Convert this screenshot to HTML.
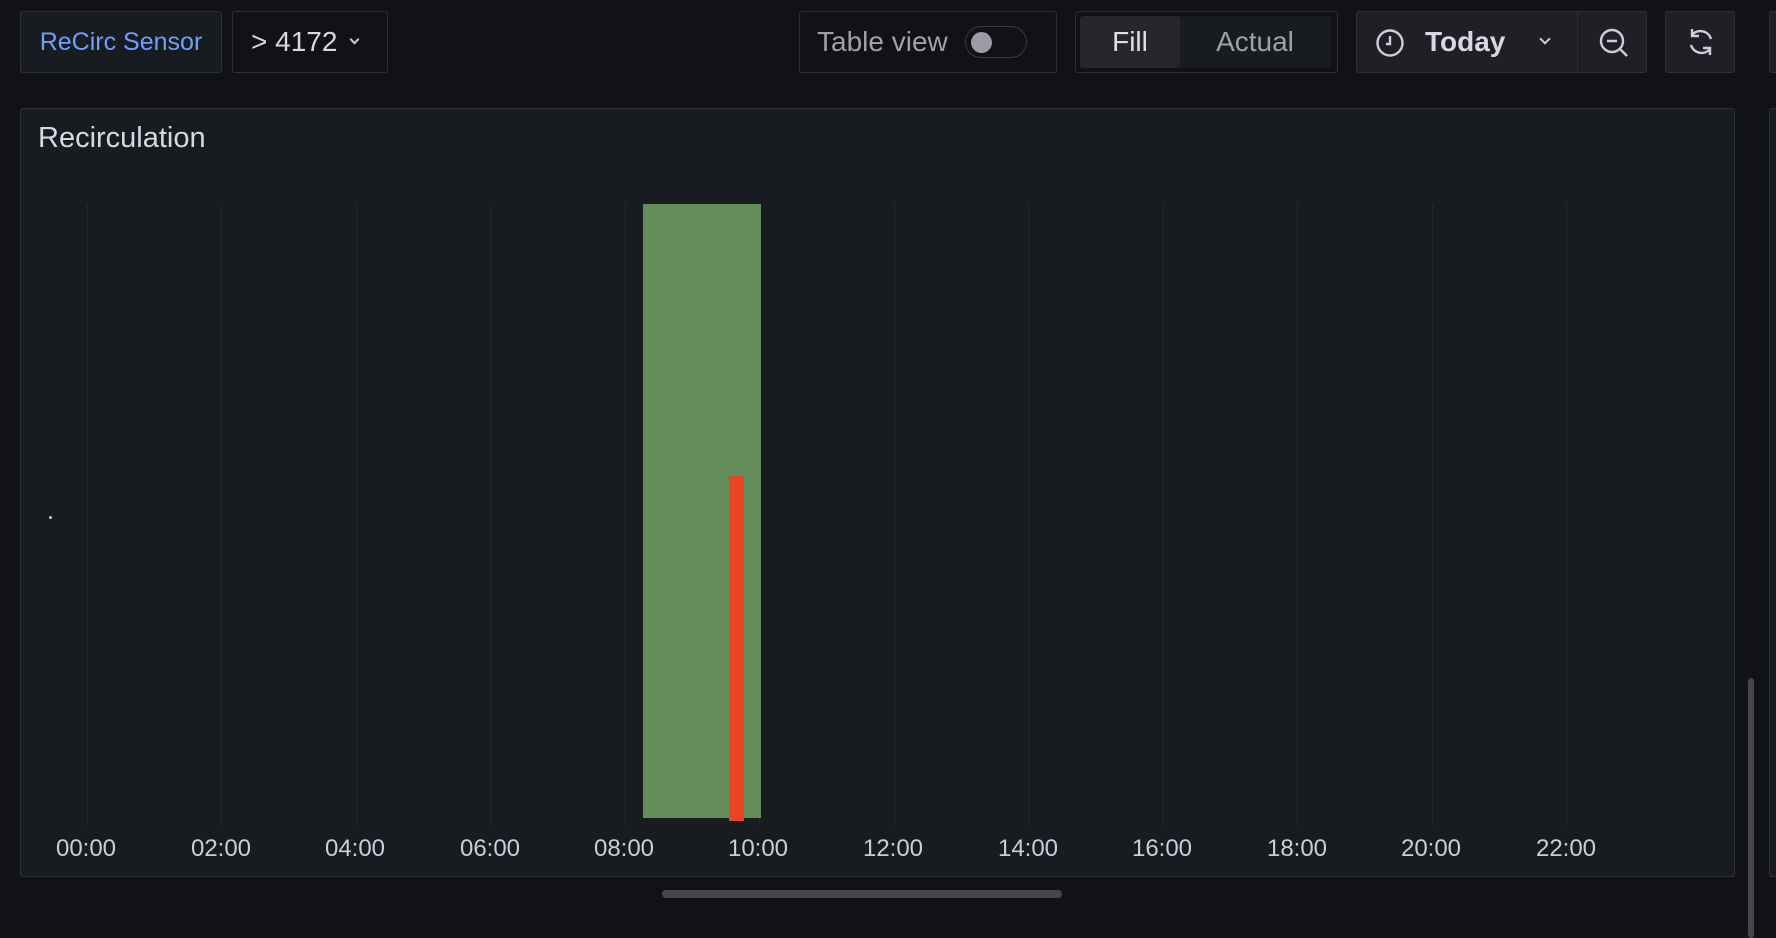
<!DOCTYPE html>
<html><head><style>
*{box-sizing:border-box;margin:0;padding:0}
body{width:1776px;height:934px;background:#111217;position:relative;overflow:hidden;font-family:"Liberation Sans",sans-serif;color:#ccccdc}
.b{position:absolute;border:1px solid #2f3036;border-radius:3px;background:#181b1f;display:flex;align-items:center}
.t{position:absolute;font-size:24px;color:#ccccdc;transform:translateX(-50%);top:835px}
.g{position:absolute;top:204px;height:622px;width:1px;background:#26282d}
.ch{display:inline-block;width:9px;height:9px;border-right:2px solid #ccccdc;border-bottom:2px solid #ccccdc;transform:rotate(45deg)}
</style></head><body>
<div class="b" style="left:20px;top:11px;width:202px;height:62px;justify-content:center;color:#6e9fff;font-size:25px">ReCirc Sensor</div>
<div class="b" style="left:232px;top:11px;width:156px;height:62px;background:#111217;padding-left:18px;font-size:28px;color:#d8d8e4">&gt; 4172 <span class="ch" style="margin-left:14px;margin-top:-6px;width:7px;height:7px"></span></div>
<div class="b" style="left:799px;top:11px;width:258px;height:62px;background:#111217;padding-left:17px;font-size:28px;color:#9fa0aa">Table view
<div style="margin-left:17px;width:62px;height:32px;border:1px solid #3a3b42;border-radius:16px;position:relative"><div style="position:absolute;left:5px;top:5px;width:21px;height:21px;border-radius:50%;background:#9a9ba6"></div></div></div>
<div class="b" style="left:1075px;top:11px;width:263px;height:62px;background:#111217;padding:4px">
<div style="width:100px;height:52px;background:#25272d;border-radius:3px;display:flex;align-items:center;justify-content:center;font-size:28px;color:#e0e0ea">Fill</div>
<div style="width:150px;height:52px;background:#181b1f;display:flex;align-items:center;justify-content:center;font-size:28px;color:#9fa0aa">Actual</div></div>
<div class="b" style="left:1356px;top:11px;width:291px;height:62px;background:#1f2026">
<svg style="position:absolute;left:18px;top:16px" width="30" height="30" viewBox="0 0 30 30" fill="none" stroke="#ccccdc" stroke-width="2.4"><circle cx="15" cy="15" r="12.5"/><path d="M15 8v8h-4"/></svg>
<span style="position:absolute;left:68px;font-size:28px;font-weight:bold;color:#d8d8e4">Today</span>
<span class="ch" style="position:absolute;left:184px;top:23px;width:8px;height:8px"></span>
<div style="position:absolute;left:220px;top:0;width:1px;height:60px;background:#2f3036"></div>
<svg style="position:absolute;left:241px;top:15px" width="32" height="32" viewBox="0 0 32 32" fill="none" stroke="#ccccdc" stroke-width="2.4"><circle cx="14" cy="14" r="11"/><path d="M9 14h10M22 22l7 7"/></svg>
</div>
<div class="b" style="left:1665px;top:11px;width:70px;height:62px;background:#1f2026">
<svg style="position:absolute;left:19px;top:14px" width="32" height="32" viewBox="0 0 32 32" fill="none" stroke="#ccccdc" stroke-width="2.4"><path d="M26 13A11 11 0 0 0 7 9M6 19a11 11 0 0 0 19 4M7 3v7h7M25 29v-7h-7"/></svg>
</div>
<div class="b" style="left:1769px;top:11px;width:20px;height:62px;background:#1f2026"></div>
<div class="b" style="left:1769px;top:108px;width:20px;height:769px"></div>
<div class="b" style="left:20px;top:108px;width:1715px;height:769px;display:block">
<div style="position:absolute;left:17px;top:13px;font-size:29px;color:#d8d8e4">Recirculation</div>
</div>
<div class="g" style="left:87px"></div><div class="g" style="left:221px"></div><div class="g" style="left:356px"></div><div class="g" style="left:490px"></div><div class="g" style="left:625px"></div><div class="g" style="left:759px"></div><div class="g" style="left:894px"></div><div class="g" style="left:1028px"></div><div class="g" style="left:1163px"></div><div class="g" style="left:1297px"></div><div class="g" style="left:1432px"></div><div class="g" style="left:1566px"></div>
<div style="position:absolute;left:643px;top:204px;width:118px;height:614px;background:#648e59"></div>
<div style="position:absolute;left:729px;top:476px;width:15px;height:345px;background:#e84428"></div>
<div style="position:absolute;left:49px;top:516px;width:3px;height:3px;background:#ccc;border-radius:50%"></div>
<div class="t" style="left:86px">00:00</div><div class="t" style="left:221px">02:00</div><div class="t" style="left:355px">04:00</div><div class="t" style="left:490px">06:00</div><div class="t" style="left:624px">08:00</div><div class="t" style="left:758px">10:00</div><div class="t" style="left:893px">12:00</div><div class="t" style="left:1028px">14:00</div><div class="t" style="left:1162px">16:00</div><div class="t" style="left:1297px">18:00</div><div class="t" style="left:1431px">20:00</div><div class="t" style="left:1566px">22:00</div>
<div style="position:absolute;left:662px;top:890px;width:400px;height:8px;border-radius:4px;background:#45464c"></div>
<div style="position:absolute;left:1748px;top:678px;width:6px;height:260px;border-radius:3px;background:#45464c"></div>
</body></html>
